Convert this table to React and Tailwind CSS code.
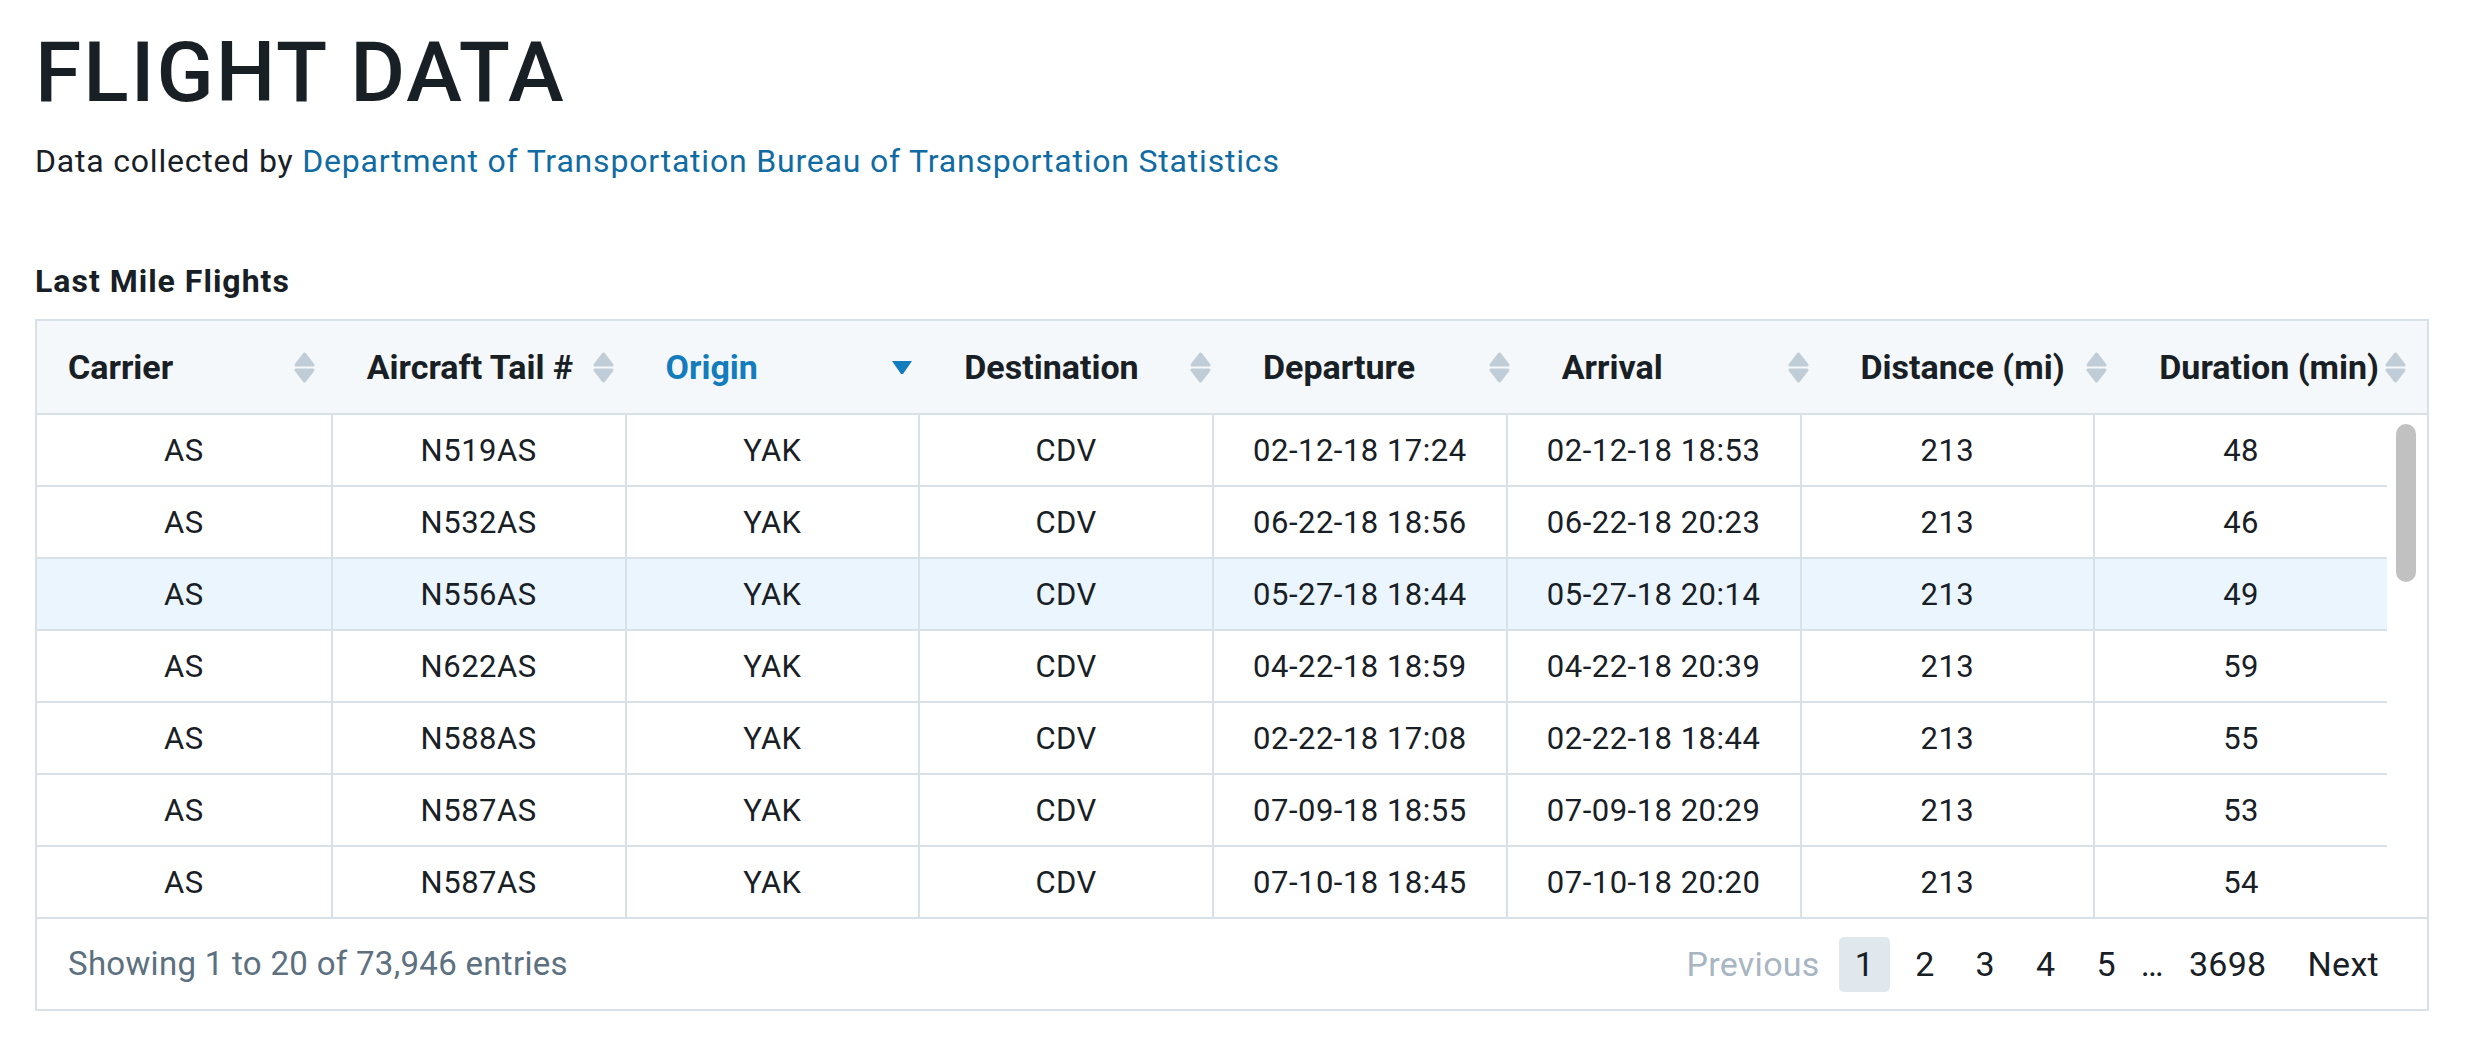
import React from "react";

const columns = [
  "Carrier",
  "Aircraft Tail #",
  "Origin",
  "Destination",
  "Departure",
  "Arrival",
  "Distance (mi)",
  "Duration (min)",
];

const flights = [
  ["AS", "N519AS", "YAK", "CDV", "02-12-18 17:24", "02-12-18 18:53", "213", "48"],
  ["AS", "N532AS", "YAK", "CDV", "06-22-18 18:56", "06-22-18 20:23", "213", "46"],
  ["AS", "N556AS", "YAK", "CDV", "05-27-18 18:44", "05-27-18 20:14", "213", "49"],
  ["AS", "N622AS", "YAK", "CDV", "04-22-18 18:59", "04-22-18 20:39", "213", "59"],
  ["AS", "N588AS", "YAK", "CDV", "02-22-18 17:08", "02-22-18 18:44", "213", "55"],
  ["AS", "N587AS", "YAK", "CDV", "07-09-18 18:55", "07-09-18 20:29", "213", "53"],
  ["AS", "N587AS", "YAK", "CDV", "07-10-18 18:45", "07-10-18 20:20", "213", "54"],
];

function SortIcon() {
  return (
    <svg width="21" height="31" viewBox="0 0 21 31" className="shrink-0">
      <path d="M10.5 2 L19 13 H2 Z" fill="#c0cdd7" stroke="#c0cdd7" strokeWidth="3" strokeLinejoin="round" />
      <path d="M2 18 H19 L10.5 29 Z" fill="#c0cdd7" stroke="#c0cdd7" strokeWidth="3" strokeLinejoin="round" />
    </svg>
  );
}

function SortedDesc() {
  return (
    <svg width="20" height="13" viewBox="0 0 20 13" className="shrink-0">
      <path d="M0 0 H20 L11 13 H9 Z" fill="#137cbd" />
    </svg>
  );
}

export default function App() {
  return (
    <div className="min-h-screen bg-white pl-[35px] pt-[31px] font-['Roboto',sans-serif] text-[#182026]">
      <h1 className="text-[84px] leading-none font-medium tracking-[2px]">FLIGHT DATA</h1>
      <p className="mt-[26px] text-[32px] leading-[40px] tracking-[0.8px]">
        Data collected by{" "}
        <a className="text-[#106ba3]">Department of Transportation Bureau of Transportation Statistics</a>
      </p>

      <h2 className="mt-[81px] text-[32px] leading-[38px] font-bold tracking-[1px]">Last Mile Flights</h2>

      <div className="mt-[19px] w-[2394px] border-2 border-[#d8e1e8]">
        {/* header */}
        <div className="grid h-[94px] grid-cols-8 border-b-2 border-[#d8e1e8] bg-[#f5f8fa]">
          {columns.map((c) => (
            <div key={c} className="flex items-center justify-between pl-[31px] pr-[21px]">
              <span
                className={
                  c === "Origin"
                    ? "text-[34px] font-bold text-[#137cbd]"
                    : "text-[34px] font-bold whitespace-nowrap"
                }
              >
                {c}
              </span>
              {c === "Origin" ? <SortedDesc /> : <SortIcon />}
            </div>
          ))}
        </div>

        {/* body */}
        <div className="flex h-[502px] overflow-hidden">
          <div className="w-[2350px] shrink-0">
            {flights.map((row, i) => (
              <div
                key={i}
                className={
                  i === 2
                    ? "grid h-[72px] grid-cols-8 border-b-2 border-[#d8e1e8] bg-[#ebf5fd]"
                    : "grid h-[72px] grid-cols-8 border-b-2 border-[#d8e1e8]"
                }
              >
                {row.map((v, j) => (
                  <div
                    key={j}
                    className={
                      j === 0
                        ? "flex items-center justify-center pt-[2px] text-[31px] tracking-[0.5px]"
                        : "flex items-center justify-center border-l-2 border-[#d8e1e8] pt-[2px] text-[31px] tracking-[0.5px]"
                    }
                  >
                    {v}
                  </div>
                ))}
              </div>
            ))}
          </div>
          <div className="flex-1 pl-[9px] pt-[9px]">
            <div className="h-[158px] w-[20px] rounded-full bg-[#c1c1c1]"></div>
          </div>
        </div>

        {/* footer */}
        <div className="flex h-[92px] items-center justify-between border-t-2 border-[#d8e1e8] pl-[31px] pr-[32px]">
          <span className="text-[33px] tracking-[0.3px] text-[#5c7080]">Showing 1 to 20 of 73,946 entries</span>
          <div className="flex items-center gap-[9px] text-[34px] tracking-[0.3px]">
            <span className="pr-[10px] text-[#a7b6c2]">Previous</span>
            <span className="flex h-[55px] items-center rounded-[5px] bg-[#e1e8ed] px-4">1</span>
            <span className="px-4">2</span>
            <span className="px-4">3</span>
            <span className="px-4">4</span>
            <span className="px-4">5</span>
            <span>…</span>
            <span className="px-4">3698</span>
            <span className="px-4">Next</span>
          </div>
        </div>
      </div>
    </div>
  );
}
